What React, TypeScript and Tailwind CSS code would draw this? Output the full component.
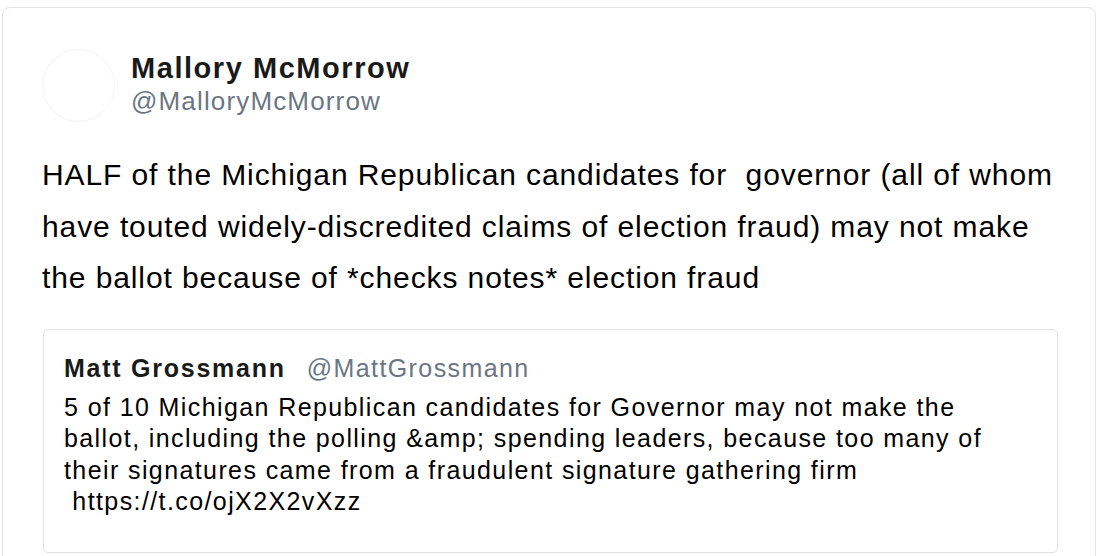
import React from 'react';

const tweet = {
  name: 'Mallory McMorrow',
  handle: '@MalloryMcMorrow',
  lines: [
    'HALF of the Michigan Republican candidates for\u00a0 governor (all of whom',
    'have touted widely-discredited claims of election fraud) may not make',
    'the ballot because of *checks notes* election fraud',
  ],
};

const quoted = {
  name: 'Matt Grossmann',
  handle: '@MattGrossmann',
  lines: [
    '5 of 10 Michigan Republican candidates for Governor may not make the',
    'ballot, including the polling &amp; spending leaders, because too many of',
    'their signatures came from a fraudulent signature gathering firm',
    '\u00a0https://t.co/ojX2X2vXzz',
  ],
};

export default function App() {
  return (
    <div className="h-[556px] overflow-hidden bg-white px-[2px] pt-[7px] font-['Liberation_Sans',Arial,sans-serif]">
      <div className="h-[580px] rounded-t-[8px] border border-[#e3e3e3] pl-[39px] pt-[41px]">
        <div className="flex items-start">
          <div className="h-[73px] w-[73px] shrink-0 rounded-full border border-[#f4f4f4]" />
          <div className="ml-[16px] mt-[2px]">
            <div className="text-[29px] font-bold leading-[34px] tracking-[1.55px] text-[#1a1a1a]">{tweet.name}</div>
            <div className="text-[26px] leading-[32px] tracking-[1.15px] text-[#6b7684]">{tweet.handle}</div>
          </div>
        </div>

        <div className="mt-[27px] text-[30px] leading-[51.5px] tracking-[0.9px] text-black">
          {tweet.lines.map((l) => (
            <div key={l} className="whitespace-pre">{l}</div>
          ))}
        </div>

        <div className="mt-[25px] ml-px h-[224px] w-[1015px] rounded-[5px] border border-[#e1e1e1] pl-[20px] pt-[22px]">
          <div className="flex items-baseline text-[25px] leading-[32px]">
            <span className="font-bold tracking-[1.75px] text-[#1a1a1a]">{quoted.name}</span>
            <span className="ml-[21px] tracking-[1.4px] text-[#6b7684]">{quoted.handle}</span>
          </div>
          <div className="mt-[8px] text-[25px] leading-[31.5px] tracking-[1.4px] text-black">
            {quoted.lines.map((l) => (
              <div key={l} className="whitespace-pre">{l}</div>
            ))}
          </div>
        </div>
      </div>
    </div>
  );
}
